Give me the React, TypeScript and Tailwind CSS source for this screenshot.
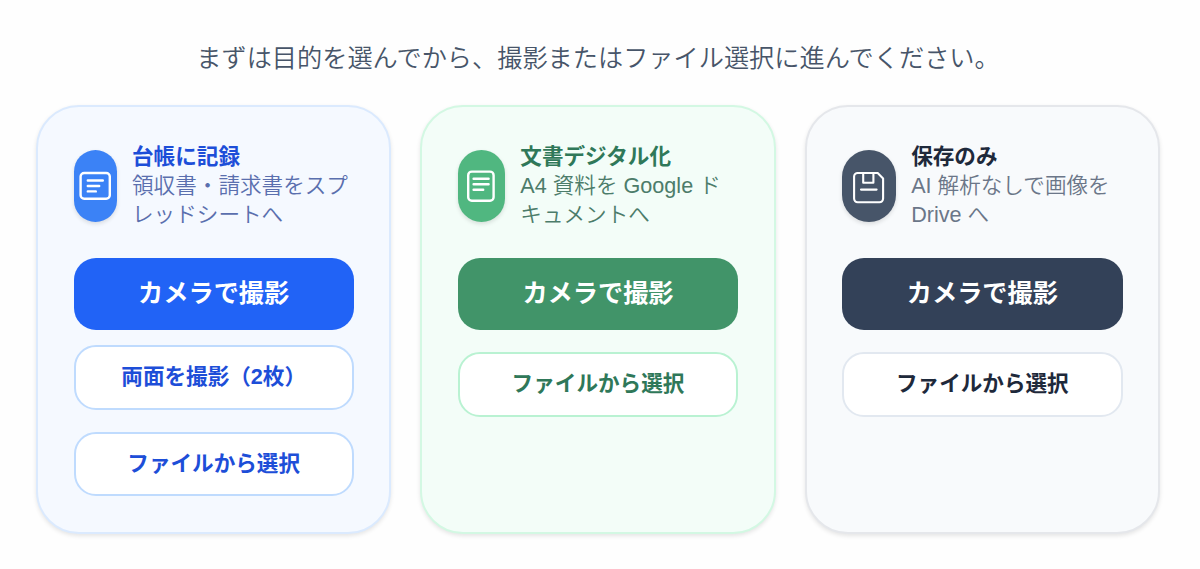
import React from 'react';
import clsx from 'clsx';

type Action = { label: string; className: string };

type Purpose = {
    title: string;
    lines: string[];
    icon: React.ReactNode;
    card: string;
    badge: string;
    titleColor: string;
    textColor: string;
    primary: string;
    secondary: string;
    actions: Action[];
};

const iconProps = {
    viewBox: '0 0 36 36',
    fill: 'none',
    stroke: 'currentColor',
    strokeWidth: 2.4,
    strokeLinecap: 'round' as const,
    strokeLinejoin: 'round' as const,
    className: 'w-9 h-9 shrink-0',
};

const LedgerIcon = () => (
    <svg {...iconProps}>
        <rect x="3.6" y="5" width="29.2" height="25.8" rx="3.6" />
        <path d="M10.8 12.5h15M10.8 18h11.4M10.8 23.4h8" />
    </svg>
);

const DocumentIcon = () => (
    <svg {...iconProps}>
        <rect x="5.2" y="3.6" width="25.4" height="29.2" rx="3.6" />
        <path d="M10.6 10.8h15M10.6 16.3h15M10.6 21.7h9.6" />
    </svg>
);

const SaveIcon = () => (
    <svg {...iconProps} strokeWidth={2.1}>
        <path d="M6.7 5h20l5.4 5.4v20.2a3.6 3.6 0 0 1-3.6 3.6H6.7a3.6 3.6 0 0 1-3.6-3.6V8.6A3.6 3.6 0 0 1 6.7 5z" />
        <path d="M12.2 5v9.8h10.2V5M10 21.6h15.6" />
    </svg>
);

const purposes: Purpose[] = [
    {
        title: '台帳に記録',
        lines: ['領収書・請求書をスプ', 'レッドシートへ'],
        icon: <LedgerIcon />,
        card: 'bg-[#f5f9ff] border-[#dbeafe]',
        badge: 'w-[43px] bg-[#3b82f6]',
        titleColor: 'text-[#1d4ed8]',
        textColor: 'text-[#5a6fae]',
        primary: 'bg-[#2163f6]',
        secondary: 'border-[#bfdbfe] text-[#1d4ed8]',
        actions: [
            { label: '両面を撮影（2枚）', className: 'mt-[15px]' },
            { label: 'ファイルから選択', className: 'mt-[22px]' },
        ],
    },
    {
        title: '文書デジタル化',
        lines: ['A4 資料を Google ド', 'キュメントへ'],
        icon: <DocumentIcon />,
        card: 'bg-[#f3fdf8] border-[#d3f8e3]',
        badge: 'w-[47px] bg-[#50b780]',
        titleColor: 'text-[#2f7859]',
        textColor: 'text-[#4c7c6a]',
        primary: 'bg-[#419469]',
        secondary: 'border-[#b9f2d2] text-[#2f7859]',
        actions: [{ label: 'ファイルから選択', className: 'mt-[22px]' }],
    },
    {
        title: '保存のみ',
        lines: ['AI 解析なしで画像を', 'Drive へ'],
        icon: <SaveIcon />,
        card: 'bg-[#f8fafc] border-[#e5e7eb]',
        badge: 'w-[53.5px] bg-[#475569]',
        titleColor: 'text-[#1e293b]',
        textColor: 'text-[#6b7688]',
        primary: 'bg-[#334158]',
        secondary: 'border-[#e2e8f0] text-[#1e293b]',
        actions: [{ label: 'ファイルから選択', className: 'mt-[22px]' }],
    },
];

function PurposeCard({ item }: { item: Purpose }) {
    return (
        <div className={clsx('h-[429px] rounded-[43px] border-2 px-[35.5px] pt-9 shadow-[0_2px_4px_rgba(0,0,0,0.1)]', item.card)}>
            <div className="flex items-center gap-[15.5px]">
                <div className={clsx('flex h-[72px] shrink-0 items-center justify-center rounded-full text-white shadow-[0_2px_4px_rgba(0,0,0,0.12)]', item.badge)}>
                    {item.icon}
                </div>
                <div className="whitespace-nowrap text-[21.6px] leading-[28.8px]">
                    <p className={clsx('font-bold', item.titleColor)}>{item.title}</p>
                    {item.lines.map((line) => (
                        <p key={line} className={clsx('font-[350]', item.textColor)}>{line}</p>
                    ))}
                </div>
            </div>

            <button className={clsx('mt-[29px] flex h-[72px] w-full items-center justify-center rounded-[22px] text-[25.2px] font-bold text-white', item.primary)}>
                カメラで撮影
            </button>
            {item.actions.map((action) => (
                <button
                    key={action.label}
                    className={clsx('flex h-[64.3px] w-full items-center justify-center rounded-[22px] border-2 bg-white text-[21.6px] font-bold', item.secondary, action.className)}
                >
                    {action.label}
                </button>
            ))}
        </div>
    );
}

export default function App() {
    return (
        <div className="h-[569px] overflow-hidden bg-[#fefefe] font-['Liberation_Sans','Noto_Sans_CJK_JP',sans-serif]">
            <p className="pt-10 pr-1 text-center text-[25.2px] leading-9 font-[350] text-[#475569]">
                まずは目的を選んでから、撮影またはファイル選択に進んでください。
            </p>
            <div className="mt-[29px] grid grid-cols-3 gap-[29px] pr-10 pl-9">
                {purposes.map((item) => (
                    <PurposeCard key={item.title} item={item} />
                ))}
            </div>
        </div>
    );
}
